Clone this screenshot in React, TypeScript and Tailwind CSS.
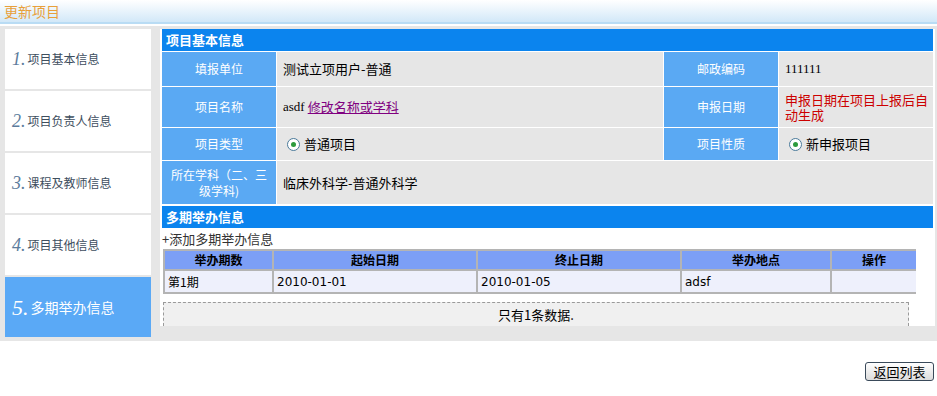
import React from "react";

const cjk = { fontFamily: '"Noto Sans CJK SC", "Liberation Sans", sans-serif' };

const navItems = ["项目基本信息", "项目负责人信息", "课程及教师信息", "项目其他信息", "多期举办信息"];

function Radio() {
  return (
    <span className="inline-flex items-center justify-center w-[13px] h-[13px] rounded-full border border-[#4a7a9a] bg-white mr-[4px]">
      <span className="w-[5px] h-[5px] rounded-full bg-[#2c9a3c]" />
    </span>
  );
}

const mono = { fontFamily: '"DejaVu Sans", sans-serif', fontSize: 12 };

export default function App() {
  return (
    <div className="w-[937px] h-[396px] bg-white text-black overflow-hidden" style={cjk}>
      {/* header */}
      <div className="h-[24px] bg-gradient-to-b from-white to-[#d2e8f8] border-b-[2px] border-[#b9dcf4] pl-[4px] text-[14px] leading-[22px] text-[#e8a03a]">
        更新项目
      </div>
      <div className="h-[2px]" />
      {/* body */}
      <div className="flex bg-[#e6e6e6] pt-[3px] pl-[5px] h-[315px]">
        {/* sidebar */}
        <div className="w-[146px] flex flex-col gap-[2px]">
          {navItems.map((t, i) => {
            const active = i === 4;
            return (
              <div
                key={t}
                className={
                  "h-[60px] flex items-center pl-[7px] " +
                  (active ? "bg-[#5aa9f6] text-white" : "bg-white text-[#3e4e5e]")
                }
              >
                <span
                  className={
                    "italic mr-[2px] " +
                    (active ? "text-[22px] text-white" : "text-[18px] text-[#5c7c9c]")
                  }
                  style={{ fontFamily: '"Liberation Serif", serif' }}
                >
                  {i + 1}.
                </span>
                <span className={active ? "text-[14px]" : "text-[12px]"}>{t}</span>
              </div>
            );
          })}
        </div>
        {/* main */}
        <div className="ml-[9px] w-[775px] h-[310px] bg-white pl-[2px] pr-[2px] flex flex-col">
          <div className="h-[22px] bg-[#0b84ee] text-white font-bold text-[13px] leading-[22px] pl-[4px]">
            项目基本信息
          </div>
          <div className="grid grid-cols-[114px_386px_114px_154px] gap-px mt-px text-[13px]">
            <div className="h-[34px] bg-[#5aa9f3] text-white text-[12px] flex items-center justify-center">填报单位</div>
            <div className="bg-[#e6e6e6] flex items-center pl-[6px]">测试立项用户-普通</div>
            <div className="bg-[#5aa9f3] text-white text-[12px] flex items-center justify-center">邮政编码</div>
            <div className="bg-[#e6e6e6] flex items-center pl-[6px]" style={{ fontFamily: '"Liberation Serif", serif' }}>111111</div>

            <div className="h-[40px] bg-[#5aa9f3] text-white text-[12px] flex items-center justify-center">项目名称</div>
            <div className="bg-[#e6e6e6] flex items-center pl-[6px]">
              <span style={{ fontFamily: '"Liberation Serif", serif' }}>asdf</span>
              <span className="ml-[3px] text-[#800080] underline">修改名称或学科</span>
            </div>
            <div className="bg-[#5aa9f3] text-white text-[12px] flex items-center justify-center">申报日期</div>
            <div className="bg-[#e6e6e6] flex items-center pl-[6px] pr-[4px] text-[#cc0000] leading-[15px]">申报日期在项目上报后自动生成</div>

            <div className="h-[32px] bg-[#5aa9f3] text-white text-[12px] flex items-center justify-center">项目类型</div>
            <div className="bg-[#e6e6e6] flex items-center pl-[10px]"><Radio />普通项目</div>
            <div className="bg-[#5aa9f3] text-white text-[12px] flex items-center justify-center">项目性质</div>
            <div className="bg-[#e6e6e6] flex items-center pl-[10px]"><Radio />新申报项目</div>

            <div className="h-[43px] bg-[#5aa9f3] text-white text-[12px] flex items-center justify-center text-center leading-[16px] px-[6px]">所在学科（二、三级学科)</div>
            <div className="col-span-3 bg-[#e6e6e6] flex items-center pl-[6px]">临床外科学-普通外科学</div>
          </div>
          <div className="h-[22px] mt-[2px] bg-[#0b84ee] text-white font-bold text-[13px] leading-[22px] pl-[4px]">
            多期举办信息
          </div>
          <div className="h-[21px] text-[13px] leading-[21px] text-[#333]">+添加多期举办信息</div>
          <div className="w-[753px] ml-px border-[2px] border-[#b4b4b4] bg-[#b4b4b4] grid grid-cols-[107px_202px_202px_148px_84px] gap-[2px] text-[12px]">
            <div className="h-[18px] bg-[#7c9ff6] font-bold flex items-center justify-center">举办期数</div>
            <div className="bg-[#7c9ff6] font-bold flex items-center justify-center">起始日期</div>
            <div className="bg-[#7c9ff6] font-bold flex items-center justify-center">终止日期</div>
            <div className="bg-[#7c9ff6] font-bold flex items-center justify-center">举办地点</div>
            <div className="bg-[#7c9ff6] font-bold flex items-center justify-center">操作</div>
            <div className="h-[21px] bg-[#eef0fc] flex items-center pl-[3px]">第1期</div>
            <div className="bg-[#eef0fc] flex items-center pl-[3px]" style={mono}>2010-01-01</div>
            <div className="bg-[#eef0fc] flex items-center pl-[3px]" style={mono}>2010-01-05</div>
            <div className="bg-[#eef0fc] flex items-center pl-[3px]" style={mono}>adsf</div>
            <div className="bg-[#eef0fc]" />
          </div>
          <div className="h-[8px]" />
          <div className="w-[746px] ml-px h-[24px] bg-[#f0f0f0] border-t border-l border-r border-dashed border-[#9a9a9a] flex items-center justify-center text-[13px]">
            只有1条数据.
          </div>
          <div className="flex-1 bg-[#e6e6e6] -mx-[2px]" />
        </div>
      </div>
      {/* footer button */}
      <div className="flex justify-end pr-[3px] pt-[21px]">
        <button className="w-[69px] h-[19px] rounded-[3px] border border-[#3a4a5a] bg-gradient-to-b from-white to-[#dcdcdc] text-[13px] leading-[17px] text-black">
          返回列表
        </button>
      </div>
    </div>
  );
}
